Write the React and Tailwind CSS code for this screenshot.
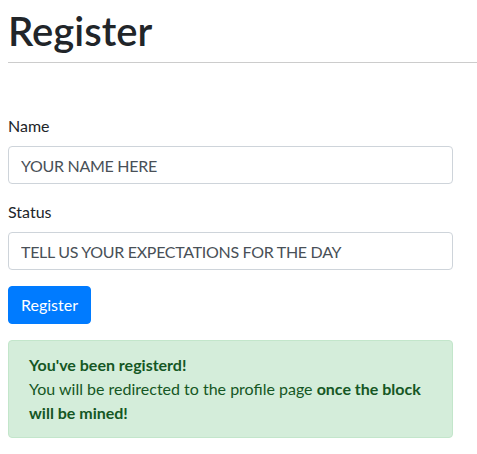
import React from "react";

const Register = () => {
  return (
    <div className="pl-2 bg-white text-[#212529] font-['Lato',sans-serif] min-h-[454px]">
      <h1 className="pt-[7px] text-[40px] leading-[48px] font-semibold">Register</h1>
      <hr className="mt-[7px] border-t border-[#cccccc]" />

      <form className="w-[445px] pt-[51px]" onSubmit={(e) => e.preventDefault()}>
        <div className="mb-4">
          <label className="block mb-2 text-base leading-6">Name</label>
          <input
            type="text"
            placeholder="YOUR NAME HERE"
            className="block w-full h-[38px] px-3 border border-[#ced4da] rounded text-base tracking-[-0.3px] text-[#495057] placeholder:text-[#495057]"
          />
        </div>

        <div className="mb-4">
          <label className="block mb-2 text-base leading-6">Status</label>
          <input
            type="text"
            placeholder="TELL US YOUR EXPECTATIONS FOR THE DAY"
            className="block w-full h-[38px] px-3 border border-[#ced4da] rounded text-base tracking-[-0.3px] text-[#495057] placeholder:text-[#495057]"
          />
        </div>

        <button
          type="submit"
          className="h-[38px] px-3 bg-[#007bff] text-white text-base rounded border border-[#007bff]"
        >
          Register
        </button>

        {/* Success alert */}
        <div className="mt-4 px-5 py-3 bg-[#d4edda] border border-[#c3e6cb] rounded text-[#155724] text-base leading-6">
          <strong>You've been registerd!</strong>
          <br />
          You will be redirected to the profile page <strong>once the block will be mined!</strong>
        </div>
      </form>
    </div>
  );
};

export default function App() {
  return <Register />;
}
